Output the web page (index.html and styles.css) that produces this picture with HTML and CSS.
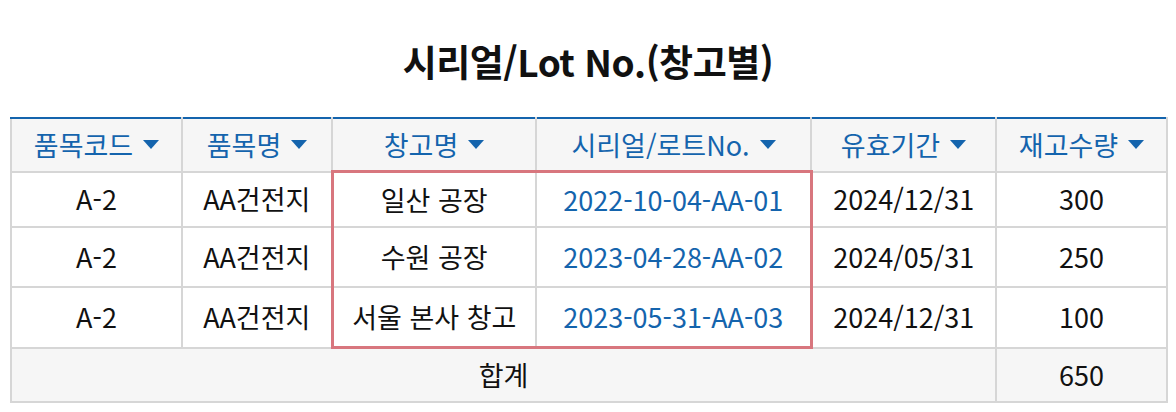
FILE: index.html
```html
<!DOCTYPE html>
<html lang="ko">
<head>
<meta charset="utf-8">
<link rel="stylesheet" href="styles.css">
</head>
<body>
<div class="page">
  <h1 class="title">시리얼/Lot No.(창고별)</h1>
  <table class="grid">
    <colgroup>
      <col class="c1"><col class="c2"><col class="c3"><col class="c4"><col class="c5"><col class="c6">
    </colgroup>
    <thead>
      <tr>
        <th><span class="th-in">품목코드<i class="caret"></i></span></th>
        <th><span class="th-in">품목명<i class="caret"></i></span></th>
        <th class="hl-top"><span class="th-in">창고명<i class="caret"></i></span></th>
        <th class="hl-top"><span class="th-in">시리얼/로트No.<i class="caret"></i></span></th>
        <th><span class="th-in">유효기간<i class="caret"></i></span></th>
        <th><span class="th-in">재고수량<i class="caret"></i></span></th>
      </tr>
    </thead>
    <tbody>
      <tr class="r1">
        <td>A-2</td>
        <td>AA건전지</td>
        <td class="hl hl-l hl-t">일산 공장</td>
        <td class="hl hl-r hl-t link">2022-10-04-AA-01</td>
        <td>2024/12/31</td>
        <td>300</td>
      </tr>
      <tr class="r2">
        <td>A-2</td>
        <td>AA건전지</td>
        <td class="hl hl-l">수원 공장</td>
        <td class="hl hl-r link">2023-04-28-AA-02</td>
        <td>2024/05/31</td>
        <td>250</td>
      </tr>
      <tr class="r2">
        <td>A-2</td>
        <td>AA건전지</td>
        <td class="hl hl-l hl-b">서울 본사 창고</td>
        <td class="hl hl-r hl-b link">2023-05-31-AA-03</td>
        <td>2024/12/31</td>
        <td>100</td>
      </tr>
      <tr class="total">
        <td colspan="5">합계</td>
        <td>650</td>
      </tr>
    </tbody>
  </table>
</div>
</body>
</html>
```
FILE: styles.css
```css
html, body {
  margin: 0;
  padding: 0;
  background: #ffffff;
}

.page {
  width: 1176px;
  padding: 0 10px;
  box-sizing: border-box;
  font-family: "Noto Sans CJK KR", "Noto Sans", sans-serif;
  color: #111111;
}

.title {
  margin: 0;
  height: 117px;
  display: flex;
  align-items: center;
  justify-content: center;
  padding-top: 4px;
  box-sizing: border-box;
  font-size: 37px;
  font-weight: 700;
  letter-spacing: -0.5px;
  color: #111111;
}

.grid {
  width: 1156px;
  table-layout: fixed;
  border-collapse: collapse;
  font-size: 27px;
  text-align: center;
}

.c1 { width: 171px; }
.c2 { width: 150px; }
.c3 { width: 204px; }
.c4 { width: 275px; }
.c5 { width: 185px; }
.c6 { width: 171px; }

.grid th,
.grid td {
  border: 2px solid #d6d6d6;
  padding: 0;
  line-height: 1.1;
  white-space: nowrap;
}

.grid th {
  border-top: 2px solid #1464ad;
  background: #f6f6f6;
  color: #1464ad;
  font-weight: 400;
  font-size: 27px;
  height: 51px;
}

.th-in {
  display: inline-flex;
  align-items: center;
}

.caret {
  display: inline-block;
  width: 0;
  height: 0;
  margin-left: 10px;
  border-left: 8px solid transparent;
  border-right: 8px solid transparent;
  border-top: 9px solid #1464ad;
}

.r1 td { height: 53px; }
.r2 td { height: 58px; }

.total td {
  height: 52px;
  background: #f6f6f6;
}

.link { color: #1464ad; }

.grid .hl-top { border-bottom: 3px solid #d8767e; }
.grid .hl-l { border-left: 3px solid #d8767e; }
.grid .hl-r { border-right: 3px solid #d8767e; }
.grid .hl-t { border-top: 3px solid #d8767e; }
.grid .hl-b { border-bottom: 3px solid #d8767e; }
```
